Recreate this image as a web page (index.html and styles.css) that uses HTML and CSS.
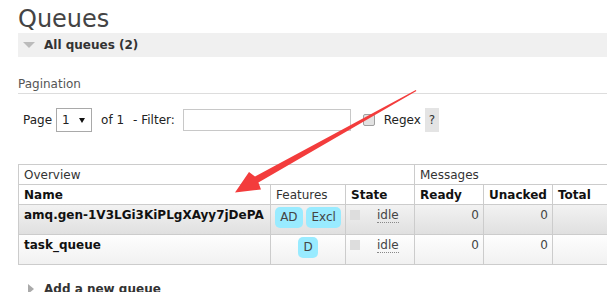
FILE: index.html
```html
<!DOCTYPE html>
<html>
<head>
<meta charset="utf-8">
<title>Queues</title>
<link rel="stylesheet" href="styles.css">
</head>
<body>
<div class="page">
  <h1 class="title">Queues</h1>
  <div class="section open"><span class="tri-down"></span><h2 class="sec-title">All queues (2)</h2></div>
  <div class="sec-body">
    <h3 class="pag-head">Pagination</h3>
    <div class="pag-row">
      <span class="lbl-page">Page</span>
      <span class="select"><span class="sel-val">1</span><span class="caret"></span></span>
      <span class="lbl-of">of 1</span>
      <span class="lbl-filter">- Filter:</span>
      <input class="filter" type="text">
      <span class="checkbox"></span>
      <span class="lbl-regex">Regex</span>
      <span class="help">?</span>
    </div>
    <table class="list">
      <colgroup>
        <col class="c-name"><col class="c-feat"><col class="c-state"><col class="c-num"><col class="c-num"><col class="c-num">
      </colgroup>
      <thead>
        <tr><th colspan="3" class="grp">Overview</th><th colspan="3" class="grp">Messages</th></tr>
        <tr><th>Name</th><th class="plain">Features</th><th>State</th><th>Ready</th><th>Unacked</th><th>Total</th></tr>
      </thead>
      <tbody>
        <tr class="alt1">
          <td class="name">amq.gen-1V3LGi3KiPLgXAyy7jDePA</td>
          <td class="feat"><abbr class="type">AD</abbr> <abbr class="type">Excl</abbr></td>
          <td class="state"><div class="st"><span class="sq"></span><abbr class="status">idle</abbr></div></td>
          <td class="num">0</td><td class="num">0</td><td class="num"></td>
        </tr>
        <tr class="alt2">
          <td class="name">task_queue</td>
          <td class="feat"><abbr class="type">D</abbr></td>
          <td class="state"><div class="st"><span class="sq"></span><abbr class="status">idle</abbr></div></td>
          <td class="num">0</td><td class="num">0</td><td class="num"></td>
        </tr>
      </tbody>
    </table>
  </div>
  <div class="section closed"><span class="tri-right"></span><h2 class="sec-title">Add a new queue</h2></div>
</div>
<svg class="arrow" width="607" height="292" viewBox="0 0 607 292">
  <polygon fill="#f33c3c" points="415.8,90.1 416.4,91.0 258.4,182.6 261,189.5 235,192.5 249,172 255,176.4"/>
</svg>
</body>
</html>
```

FILE: styles.css
```css
html, body {
  margin: 0;
  padding: 0;
  overflow: hidden;
  background: #fff;
}
body {
  font-family: "DejaVu Sans", Verdana, sans-serif;
  font-size: 12px;
  line-height: 14px;
  color: #333;
  width: 607px;
  height: 292px;
  position: relative;
}
.page {
  padding-left: 18px;
}
.title {
  margin: 5px 0 0;
  font-size: 24px;
  line-height: 28px;
  font-weight: normal;
  color: #444;
}
.section {
  display: flex;
  align-items: center;
  height: 24px;
  padding-left: 5px;
}
.section.open {
  background: #f0f0f0;
}
.sec-title {
  margin: 0;
  font-size: 12px;
  line-height: 14px;
  font-weight: bold;
  color: #333;
}
.tri-down {
  width: 0;
  height: 0;
  border-left: 6px solid transparent;
  border-right: 6px solid transparent;
  border-top: 6px solid #bbb;
  margin-right: 9px;
}
.tri-right {
  width: 0;
  height: 0;
  border-top: 5px solid transparent;
  border-bottom: 5px solid transparent;
  border-left: 6px solid #aaa;
  margin-left: 5px;
  margin-right: 10px;
}
.section.closed {
  margin-top: 12px;
}
.pag-head {
  margin: 20px 0 0;
  font-size: 12px;
  line-height: 14px;
  font-weight: normal;
  color: #555;
  padding-bottom: 2px;
  border-bottom: 1px solid #ddd;
}
.pag-row {
  display: flex;
  align-items: center;
  height: 24px;
  margin-top: 14px;
  padding-left: 5px;
  color: #222;
}
.select {
  display: flex;
  align-items: center;
  box-sizing: border-box;
  width: 36px;
  height: 24px;
  margin-left: 4px;
  border: 1px solid #a9a9a9;
  padding-left: 5px;
  background: #fff;
}
.caret {
  width: 0;
  height: 0;
  border-left: 3px solid transparent;
  border-right: 3px solid transparent;
  border-top: 5px solid #111;
  margin-left: 9px;
}
.lbl-of {
  margin-left: 9px;
}
.lbl-filter {
  margin-left: 9px;
}
.filter {
  box-sizing: border-box;
  width: 168px;
  height: 22px;
  margin: 0 0 0 8px;
  padding: 0;
  border: 1px solid #c8c8c8;
  background: #fff;
  font: inherit;
}
.checkbox {
  box-sizing: border-box;
  width: 12px;
  height: 12px;
  margin-left: 12px;
  margin-top: -1px;
  border: 1px solid #a0a0a0;
  border-radius: 2px;
  background: #e2e2e2;
}
.lbl-regex {
  margin-left: 9px;
}
.help {
  display: flex;
  align-items: center;
  justify-content: center;
  width: 14px;
  height: 24px;
  margin-left: 4px;
  margin-top: -1px;
  background: #e4e4e4;
  color: #333;
}
.list {
  margin-top: 32px;
  border-collapse: separate;
  border-spacing: 0;
  table-layout: fixed;
  width: 604px;
  border-top: 1px solid #ccc;
  border-left: 1px solid #ccc;
}
.c-name { width: 252px; }
.c-feat { width: 75px; }
.c-state { width: 69px; }
.c-num { width: 69px; }
.list th,
.list td {
  border-right: 1px solid #ccc;
  border-bottom: 1px solid #ccc;
  text-align: left;
  vertical-align: top;
  padding: 3px 5px 2px;
  line-height: 14px;
  white-space: nowrap;
  overflow: hidden;
}
.list th {
  font-weight: bold;
  color: #111;
  background: #fff;
}
.list th.grp,
.list th.plain {
  font-weight: normal;
  color: #333;
}
.list td {
  padding: 3px 5px 11px;
}
.list tr.alt1 td {
  background: linear-gradient(to bottom, #f2f2f2 0%, #e0e0e0 100%);
}
.list tr.alt2 td {
  background: linear-gradient(to bottom, #fefefe 0%, #f1f1f1 100%);
}
.list td.name {
  font-weight: bold;
  color: #111;
}
.list td.feat {
  text-align: center;
  padding: 2px 4px 5px;
}
.type {
  display: inline-block;
  vertical-align: top;
  padding: 4px 5px;
  line-height: 13px;
  border-radius: 5px;
  background: #99ebff;
  color: #444;
  text-decoration: none;
}
.list td.state {
  padding-left: 4px;
}
.st {
  display: flex;
  align-items: flex-start;
}
.sq {
  width: 10px;
  height: 10px;
  margin-top: 2px;
  margin-right: 17px;
  background: #ddd;
  flex: none;
}
.status {
  color: #444;
  text-decoration: none;
  border-bottom: 1px dotted #888;
}
.list td.num {
  text-align: right;
  padding-right: 4px;
  color: #444;
}
.arrow {
  position: absolute;
  top: 0;
  left: 0;
  pointer-events: none;
}
```
